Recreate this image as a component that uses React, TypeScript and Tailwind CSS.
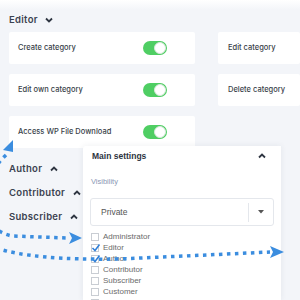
import React from "react";

const Toggle = () => (
  <div className="relative w-[24px] h-[14px] rounded-full bg-[#4fce63]">
    <div className="absolute right-[1px] top-[1px] w-[12px] h-[12px] rounded-full bg-white border border-[#d9e8dc]" />
  </div>
);

const ChevDown = () => (
  <svg width="8" height="6" viewBox="0 0 8 6">
    <polyline points="1,1.5 4,4.5 7,1.5" fill="none" stroke="#2f3642" strokeWidth="1.8" />
  </svg>
);

const ChevUp = () => (
  <svg width="8" height="6" viewBox="0 0 8 6">
    <polyline points="1,4.5 4,1.5 7,4.5" fill="none" stroke="#2f3642" strokeWidth="1.8" />
  </svg>
);

const LeftCard = ({ label }: { label: string }) => (
  <div className="h-[32px] bg-white rounded-[2px] flex items-center justify-between pl-[9px] pr-[28px]">
    <span className="text-[7.5px] font-medium text-[#3a3f4a]">{label}</span>
    <Toggle />
  </div>
);

const RightCard = ({ label }: { label: string }) => (
  <div className="h-[32px] bg-white rounded-[2px] flex items-center pl-[10px]">
    <span className="text-[7.5px] font-medium text-[#3a3f4a]">{label}</span>
  </div>
);

const Heading = ({ label }: { label: string }) => (
  <div className="h-[24px] flex items-center gap-[8px]">
    <span className="text-[9.5px] font-semibold tracking-[0.3px] text-[#3b4250]">{label}</span>
    <ChevUp />
  </div>
);

const roles: [string, boolean][] = [
  ["Administrator", false],
  ["Editor", true],
  ["Author", true],
  ["Contributor", false],
  ["Subscriber", false],
  ["Customer", false],
  ["", false],
];

export default function App() {
  return (
    <div
      className="relative w-[300px] h-[300px] overflow-hidden bg-[#f3f5f9]"
      style={{ fontFamily: "Inter, 'Noto Sans', sans-serif" }}
    >
      <div className="h-[10px] bg-gradient-to-b from-white to-[#f3f5f9]" />
      <div className="pl-[9px]">
        <div className="h-[20px] flex items-center gap-[7px]">
          <span className="text-[9.5px] font-semibold tracking-[0.3px] text-[#3b4250]">Editor</span>
          <ChevDown />
        </div>
        <div className="mt-[2px] flex gap-[23px]">
          <div className="w-[186px] flex flex-col gap-[10px]">
            <LeftCard label="Create category" />
            <LeftCard label="Edit own category" />
            <LeftCard label="Access WP File Download" />
          </div>
          <div className="flex-1 flex flex-col gap-[10px]">
            <RightCard label="Edit category" />
            <RightCard label="Delete category" />
          </div>
        </div>
        <div className="mt-[9px] flex flex-col">
          <Heading label="Author" />
          <Heading label="Contributor" />
          <Heading label="Subscriber" />
        </div>
      </div>

      <div
        className="absolute left-[83px] top-[146px] w-[198px] bottom-0 bg-white rounded-tl-[3px] shadow-[0_0_6px_rgba(40,50,80,0.08)] px-[7px]"
        style={{ fontFamily: "'Liberation Sans', Arial, sans-serif" }}
      >
        <div className="h-[20px] flex items-center justify-between pl-[2px] pr-[8px]">
          <span className="text-[8.5px] font-bold text-[#2d3440]">Main settings</span>
          <ChevUp />
        </div>
        <div className="mt-[10px] h-[12px] flex items-center pl-[1px] text-[7.5px] text-[#8a98b4]">Visibility</div>
        <div className="mt-[10px] h-[28px] border border-[#e4e7ec] rounded-[3px] flex items-center">
          <span className="flex-1 pl-[10px] text-[8.5px] text-[#555]">Private</span>
          <div className="w-px h-[19px] bg-[#e4e7ec]" />
          <div className="w-[24px] flex justify-center">
            <svg width="6" height="4" viewBox="0 0 6 4">
              <polygon points="0,0 6,0 3,3.5" fill="#555" />
            </svg>
          </div>
        </div>
        <div className="mt-[5px] flex flex-col pl-[1px]">
          {roles.map(([r, c], i) => (
            <div key={i} className="h-[11px] flex items-center gap-[4px]">
              <div className="relative w-[8px] h-[8px] border border-[#c9cdd3] bg-white">
                {c && (
                  <svg className="absolute left-[-1px] top-[-2px]" width="10" height="10" viewBox="0 0 10 10">
                    <polyline points="1.5,5 4,7.5 8.5,1.5" fill="none" stroke="#2f7fd8" strokeWidth="1.5" />
                  </svg>
                )}
              </div>
              {r && <span className="text-[8px] text-[#6b6b6b] leading-none">{r}</span>}
            </div>
          ))}
        </div>
      </div>

      <svg className="absolute inset-0 pointer-events-none" width="300" height="300" viewBox="0 0 300 300">
        <g fill="none" stroke="#3b8ddf" strokeWidth="3.5" strokeDasharray="3.5 4.5">
          <path d="M 6 155 C -25 185, -25 228, 12 236 L 68 238" />
          <path d="M -4 248 C 20 256, 60 260, 120 259 L 270 252" />
        </g>
        <g fill="#3b8ddf">
          <polygon points="13,140 13,152 3,150" />
          <polygon points="69,232 82,238 69,244 72,238" />
          <polygon points="270,246 284,252 270,258 273,252" />
        </g>
      </svg>
    </div>
  );
}
